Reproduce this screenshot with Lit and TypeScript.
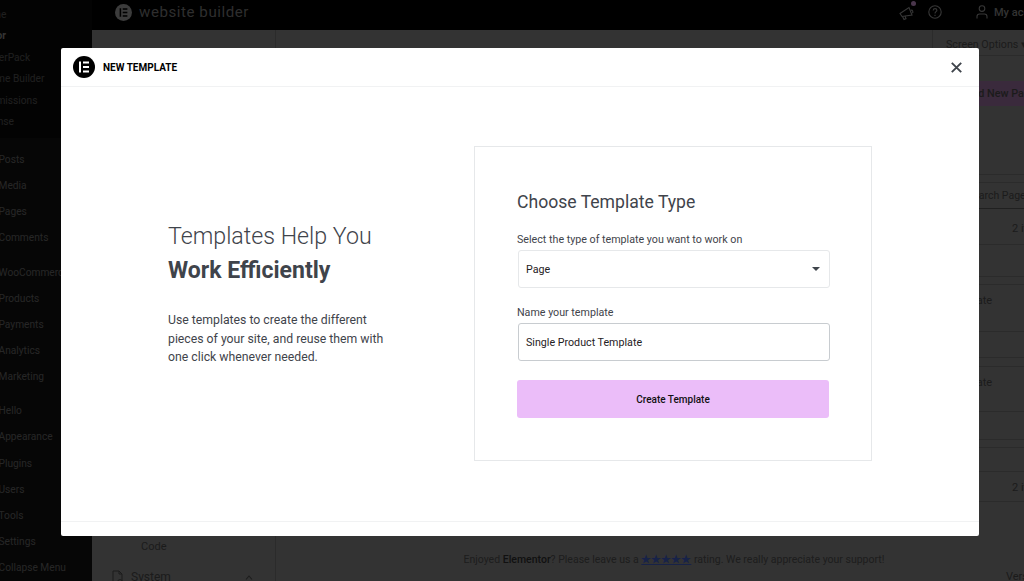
import { LitElement, css, html, svg } from 'lit';
import { customElement } from 'lit/decorators.js';

const SUBMENU = ['Home', 'Editor', 'PowerPack', 'Theme Builder', 'Submissions', 'License'];
const MENU_GROUPS = [
    ['Posts', 'Media', 'Pages', 'Comments'],
    ['WooCommerce', 'Products', 'Payments', 'Analytics', 'Marketing'],
    ['Hello', 'Appearance', 'Plugins', 'Users', 'Tools', 'Settings', 'Collapse Menu'],
];

// heights of the list rows that stick out to the right of the dialog
const ROWS: { h: number; text?: string; cls?: string }[] = [
    { h: 69 },
    { h: 8 },
    { h: 26, text: 'Search Pages', cls: 'search' },
    { h: 36, text: '2 items', cls: 'count' },
    { h: 32 },
    { h: 8 },
    { h: 47, text: 'Elementor Template', cls: 'kind' },
    { h: 26 },
    { h: 9 },
    { h: 45, text: 'Elementor Template', cls: 'kind' },
    { h: 28 },
    { h: 8 },
    { h: 24 },
    { h: 30, text: '2 items', cls: 'count last' },
];

const logo = (size: number, bg: string, fg: string) => html`
<svg width=${size} height=${size} viewBox="0 0 22 22">
    <circle cx="11" cy="11" r="11" fill=${bg}></circle>
    ${svg`<g fill=${fg}>
        <rect x="6" y="5.5" width="2" height="11"></rect>
        <rect x="10" y="5.5" width="6" height="2"></rect>
        <rect x="10" y="10" width="6" height="2"></rect>
        <rect x="10" y="14.5" width="6" height="2"></rect>
    </g>`}
</svg>`;

@customElement('app-root')
export class AppRoot extends LitElement
{
    protected render(): unknown
    {
        return html`
<div class="admin">
    <aside class="sidebar">
        <div class="submenu">
            ${SUBMENU.map((s) => html`<div class="sub ${s === 'Editor' ? 'current' : ''}">${s}</div>`)}
        </div>
        ${MENU_GROUPS.map((g) => html`
        <div class="group">
            ${g.map((m) => html`<div class="item">${m}</div>`)}
        </div>`)}
    </aside>
    <div class="main">
        <header class="topbar">
            <div class="brand">
                ${logo(17, '#c8c8c8', '#000')}
                <span>website builder</span>
            </div>
            <div class="tools">
                <span class="bell">
                    <svg width="17" height="17" viewBox="0 0 17 17" fill="none" stroke="#b8b8b8" stroke-width="1.1">
                        <path d="M2 9.5 11 3.5 14 11 4 12.5Z"></path>
                        <path d="M4.5 12.5 6 15.5 8 14.6 7 12"></path>
                        <path d="M13 6.2c1.6-.5 2.5 2 1.4 3"></path>
                    </svg>
                    <i class="dot"></i>
                </span>
                <svg width="14" height="14" viewBox="0 0 14 14" fill="none" stroke="#b8b8b8" stroke-width="1.1">
                    <circle cx="7" cy="7" r="6.2"></circle>
                    <path d="M5.2 5.4C5.3 3 8.9 3.1 8.9 5.3 8.9 6.7 7 6.7 7 8.4"></path>
                    <path d="M7 9.7v1.2"></path>
                </svg>
                <svg class="person" width="12" height="14" viewBox="0 0 12 14" fill="none" stroke="#b8b8b8" stroke-width="1.1">
                    <circle cx="6" cy="3.6" r="2.8"></circle>
                    <path d="M1 13.5V11.5C1 9.8 2.2 9 3.6 9H8.4C9.8 9 11 9.8 11 11.5V13.5"></path>
                </svg>
                <span class="account">My account</span>
            </div>
        </header>
        <div class="below">
            <nav class="subnav">
                <div class="code">Code</div>
                <div class="system">
                    <svg width="11" height="14" viewBox="0 0 11 14" fill="none" stroke="#5d5d5d" stroke-width="1">
                        <path d="M1 13V1H7L10 4V13"></path>
                        <path d="M7 1V4H10"></path>
                        <circle cx="8" cy="12" r="2.4"></circle>
                    </svg>
                    <span>System</span>
                    <svg class="caret" width="8" height="5" viewBox="0 0 8 5" fill="none" stroke="#5d5d5d" stroke-width="1.1">
                        <path d="M1 4.5 4 1 7 4.5"></path>
                    </svg>
                </div>
            </nav>
            <main class="content">
                <div class="options"><span class="options-tab">Screen Options ▾</span></div>
                <div class="add-gap"></div>
                <div class="add"><span>Add New Page</span></div>
                ${ROWS.map((r) => html`
                <div class="row ${r.cls ?? ''}" style="height:${r.h}px"><span>${r.text ?? ''}</span></div>`)}
                <div class="thanks">
                    Enjoyed <b>Elementor</b>? Please leave us a <a>★★★★★</a> rating. We really appreciate your support!
                </div>
                <div class="version">Version 6.0</div>
            </main>
        </div>
    </div>
</div>

<div class="overlay">
    <section class="dialog">
        <header class="dialog-head">
            ${logo(22, '#000', '#fff')}
            <span class="dialog-title">NEW TEMPLATE</span>
            <svg class="close" width="11" height="11" viewBox="0 0 11 11" fill="none" stroke="#3f444b" stroke-width="1.9">
                <path d="M.8.8 10.2 10.2M10.2.8.8 10.2"></path>
            </svg>
        </header>
        <div class="dialog-body">
            <div class="intro">
                <h1>Templates Help You <b>Work Efficiently</b></h1>
                <p>Use templates to create the different pieces of your site, and reuse them with one click whenever needed.</p>
            </div>
            <form class="card">
                <h2>Choose Template Type</h2>
                <label class="first">Select the type of template you want to work on</label>
                <div class="field select">
                    <span>Page</span>
                    <svg width="8" height="4" viewBox="0 0 8 4"><path d="M0 0H8L4 4Z" fill="#3f444b"></path></svg>
                </div>
                <label>Name your template</label>
                <div class="field name"><span>Single Product Template</span></div>
                <div class="create">Create Template</div>
            </form>
        </div>
        <footer class="dialog-foot"></footer>
    </section>
</div>`;
    }

    static get styles()
    {
        return css`
:host {
    display: block;
    position: relative;
    width: 1024px;
    height: 581px;
    overflow: hidden;
    font-family: Roboto, "Liberation Sans", sans-serif;
    background: #fff;
}

* {
    box-sizing: border-box;
}

.admin {
    display: flex;
    height: 581px;
    overflow: hidden;
}

/* left admin menu, cut off by the window edge */
.sidebar {
    width: 92px;
    flex: none;
    overflow: hidden;
    background: #171717;
    color: #808080;
    font-size: 10.2px;
    white-space: nowrap;
}

.submenu {
    height: 138px;
    padding-top: 4px;
    margin-bottom: 9px;
    background: #0d0d0d;
    color: #6a6a6a;
}

.sub {
    height: 21.45px;
    line-height: 21.45px;
    margin-left: -21px;
}

.sub.current {
    color: #b0b0b0;
    font-weight: 700;
}

.group {
    margin-bottom: 8.5px;
}

.item {
    height: 26.05px;
    line-height: 26.05px;
    margin-left: -1.5px;
}

.main {
    flex: 1;
    min-width: 0;
    display: flex;
    flex-direction: column;
}

.topbar {
    height: 30px;
    flex: none;
    display: flex;
    align-items: center;
    justify-content: space-between;
    padding: 0 0 6px 23px;
    background: #000;
    color: #9a9a9a;
}

.brand {
    display: flex;
    align-items: center;
    gap: 7px;
    font-size: 15.1px;
    letter-spacing: 0.55px;
}

.tools {
    display: flex;
    align-items: center;
    width: 126px;
    white-space: nowrap;
    font-size: 11px;
    font-weight: 500;
    color: #aaaaaa;
    flex: none;
}

.tools > * {
    flex: none;
}

.bell {
    position: relative;
    display: flex;
    margin-right: 13px;
}

.dot {
    position: absolute;
    top: -3px;
    right: -1px;
    width: 5px;
    height: 5px;
    border-radius: 50%;
    background: #f7b4ff;
}

.person {
    margin-left: 34px;
}

.account {
    margin-left: 6px;
}

.below {
    flex: 1;
    min-height: 0;
    display: flex;
    background: #aaaaaa;
}

.subnav {
    width: 184px;
    flex: none;
    border-right: 1px solid #8f8f8f;
    padding-top: 510px;
    color: #5d5d5d;
    font-size: 11px;
}

.code {
    margin-left: 49px;
    line-height: 14px;
}

.system {
    display: flex;
    align-items: center;
    margin: 16px 0 0 20px;
    font-size: 12px;
}

.system span {
    margin-left: 8px;
}

.caret {
    margin-left: 74px;
}

.content {
    flex: 1;
    min-width: 0;
    font-size: 11px;
    color: #5d5d5d;
    white-space: nowrap;
    overflow: hidden;
}

.options {
    height: 26px;
    border-bottom: 1px solid #8f8f8f;
    padding-left: 656px;
}

.options-tab {
    display: block;
    height: 26px;
    width: 200px;
    padding: 8px 0 0 13px;
    border-left: 1px solid #8f8f8f;
    font-size: 10.7px;
}

.add-gap {
    height: 25px;
}

.add {
    height: 25px;
    line-height: 25px;
    padding-left: 689px;
    background: #c18cc8;
    font-size: 10.8px;
    font-weight: 500;
}

.row {
    border-bottom: 1px solid #8f8f8f;
    overflow: hidden;
}

.search {
    padding-left: 691px;
    line-height: 25px;
    font-size: 10.5px;
    border-bottom-color: #6b6b6b;
}

.count {
    padding: 12.5px 0 0 736px;
}

.count.last {
    padding-top: 9px;
}

.kind {
    padding: 9px 0 0 618px;
}

.thanks {
    margin-top: 51px;
    text-align: center;
    font-size: 10.5px;
    line-height: 13px;
    width: 796px;
    color: #646464;
}

.thanks b {
    color: #3a3a3a;
    font-weight: 500;
}

.thanks a {
    color: #4f72f0;
    font-weight: 700;
    text-decoration: underline;
}

.version {
    margin: 4px 0 0 730px;
    font-size: 11px;
}

/* dialog on top of the dimmed page */
.overlay {
    position: absolute;
    inset: 0;
    display: flex;
    padding: 48px 45px 45px 61px;
    background: rgba(0, 0, 0, 0.7);
}

.dialog {
    flex: 1;
    min-width: 0;
    display: flex;
    flex-direction: column;
    background: #fff;
    border-radius: 2px;
    color: #3f444b;
}

.dialog-head {
    height: 39px;
    flex: none;
    display: flex;
    align-items: center;
    padding: 0 17px 0 12px;
    border-bottom: 1px solid #f1f2f3;
}

.dialog-title {
    margin-left: 8px;
    font-size: 10px;
    font-weight: 700;
    color: #000;
    flex: 1;
}

.dialog-body {
    flex: 1;
    min-height: 0;
    display: flex;
    padding: 59px 0 0 107px;
}

.intro {
    width: 222px;
    margin-right: 84px;
    padding-top: 73px;
}

h1 {
    margin: 0;
    font-size: 23.2px;
    font-weight: 300;
    line-height: 34.5px;
}

h1 b {
    display: block;
    font-size: 23px;
    font-weight: 700;
}

p {
    margin: 23px 0 0;
    font-size: 12.25px;
    line-height: 18.5px;
}

.card {
    width: 398px;
    height: 315px;
    border: 1px solid #e6e8ea;
    padding: 44px 41px 0 42px;
    display: flex;
    flex-direction: column;
}

h2 {
    margin: 0;
    font-size: 17.6px;
    font-weight: 400;
    line-height: 22px;
}

label {
    margin-top: 18px;
    font-size: 10.7px;
    line-height: 13px;
}

label.first {
    margin-top: 20px;
}

.field {
    height: 38px;
    display: flex;
    align-items: center;
    justify-content: space-between;
    margin: 4px 0 0 1px;
    padding: 0 9px 0 7px;
    border-radius: 3px;
    font-size: 10.7px;
    color: #1f2124;
    background: #fff;
}

.select {
    border: 1px solid #e6e8ea;
}

.name {
    border: 1px solid #c8ccd0;
}

.create {
    height: 38px;
    margin-top: 19px;
    margin-right: 1px;
    display: flex;
    align-items: center;
    justify-content: center;
    border-radius: 3px;
    background: #ebbdf9;
    color: #111;
    font-size: 10px;
    font-weight: 500;
}

.dialog-foot {
    height: 15px;
    flex: none;
    border-top: 1px solid #f1f2f3;
}
        `;
    }
}
